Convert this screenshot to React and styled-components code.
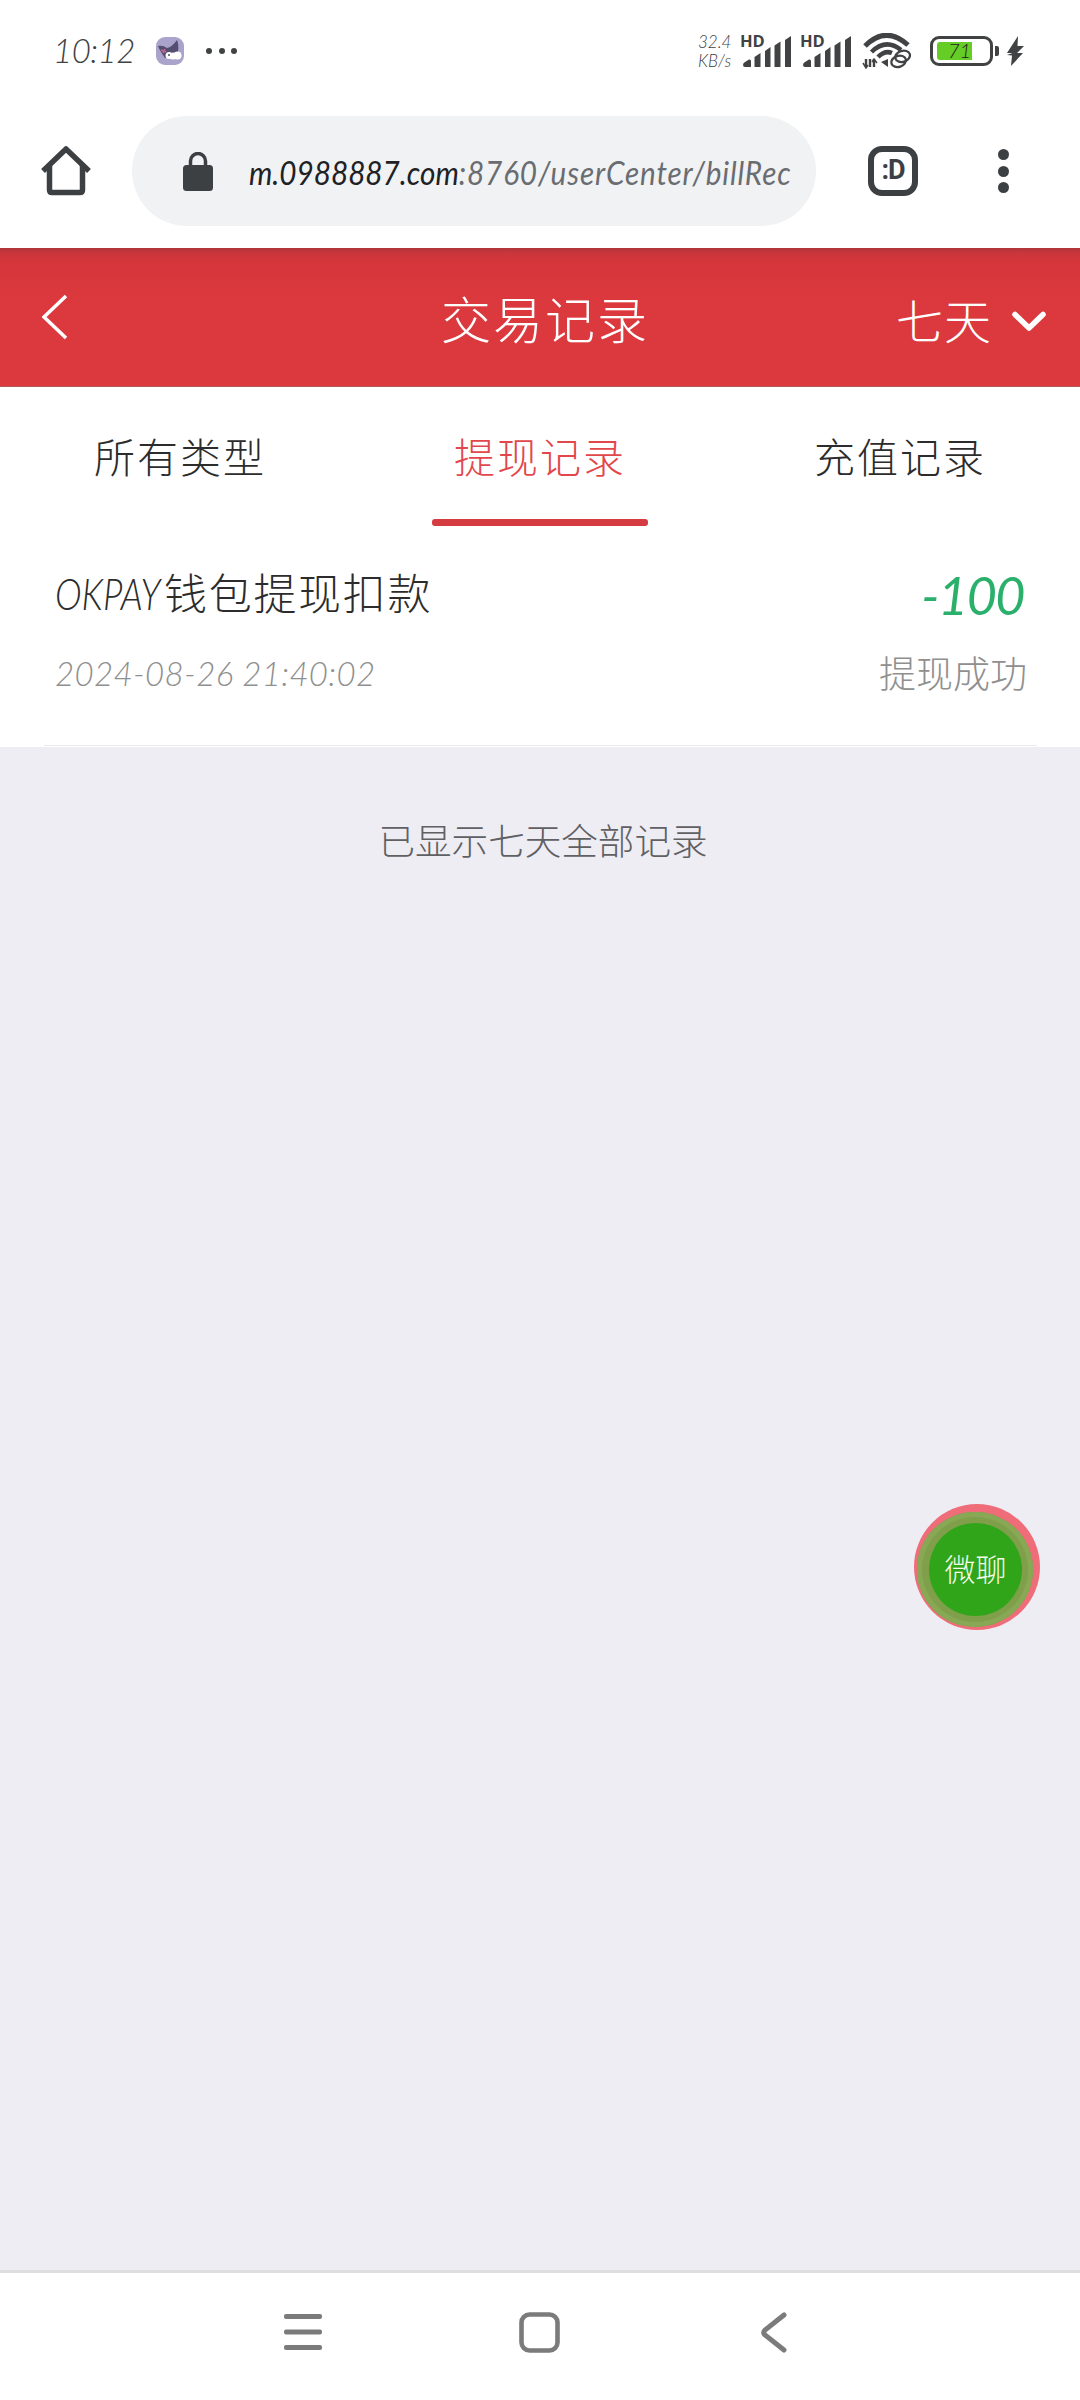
import React from 'react';
import styled, { createGlobalStyle } from 'styled-components';

const GlobalStyle = createGlobalStyle`
  * {
    box-sizing: border-box;
  }

  body {
    margin: 0;
    background: #eeedf3;
    font-family: Lato, 'Noto Sans CJK SC', sans-serif;
    font-weight: 300;
  }

  svg {
    display: block;
    flex-shrink: 0;
  }
`;

const tabs = ['所有类型', '提现记录', '充值记录'];

const records = [
  {
    wallet: 'OKPAY',
    title: '钱包提现扣款',
    time: '2024-08-26 21:40:02',
    amount: '-100',
    state: '提现成功',
  },
];

const SignalIcon = () => (
  <Signal>
    <HdLabel>HD</HdLabel>
    <svg width="49" height="31" viewBox="0 0 49 31" fill="#414243">
      <path d="M0 29 Q0 27 2 26 L6 23.5 Q8 23 8 25 V31 H2 Q0 31 0 29Z" />
      <path d="M11.5 21 L17.5 17 V31 H11.5Z" />
      <path d="M22 15 L27.500 11 V31 H22Z" />
      <path d="M31.500 9.500 L37.500 5.500 V31 H31.500Z" />
      <path d="M42 4 L48 0 V31 H42Z" />
    </svg>
  </Signal>
);

const WifiIcon = () => (
  <svg width="50" height="36" viewBox="-2 0 50 36" fill="none" stroke="#414243">
    <path d="M2 13 Q23 -8 45 12" strokeWidth="5" />
    <path d="M8.500 19 Q23 5 38 17" strokeWidth="4.500" />
    <path d="M15 24 Q22 17 29 20" strokeWidth="4.500" />
    <path d="M3 26 V34 M7 34 V26 M11 26 V34" strokeWidth="2.400" />
    <path d="M0 30 L3 35 L5 32 M9 29 L11 26 L14 30" strokeWidth="1.500" />
    <path d="M18 29 L25 26 V34Z" fill="#414243" stroke="none" />
    <ellipse cx="39.500" cy="23.500" rx="7.500" ry="5.500" strokeWidth="2.300" transform="rotate(-18 39 23)" />
    <ellipse cx="35.500" cy="28.500" rx="7.500" ry="5.500" strokeWidth="2.300" transform="rotate(-18 35 28)" />
  </svg>
);

const App = () => (
  <>
    <GlobalStyle />
    <Screen>
      <StatusBar>
        <Clock>10:12</Clock>
        <svg width="28" height="28" viewBox="0 0 28 28">
          <rect width="28" height="28" rx="9" fill="#aaa3cc" />
          <path d="M2 9 Q7 8 11 11 Q16 10 21 3 Q23 8 22 15 L19 20 L9 21 Q4 14 2 9Z" fill="#554e70" />
          <path d="M5 13 L10 15 M7 16 L9 12" stroke="#c06a94" strokeWidth="1.500" />
          <circle cx="13" cy="18.500" r="3.500" fill="#fff" />
          <circle cx="17" cy="19" r="3.500" fill="#fff" />
          <circle cx="21.500" cy="18.500" r="4" fill="#fff" />
          <circle cx="13" cy="18" r="1" fill="#554e70" />
        </svg>
        <MoreDots>
          <i />
          <i />
          <i />
        </MoreDots>
        <StatusRight>
          <Speed>
            <span>32.4</span>
            <span>KB/s</span>
          </Speed>
          <SignalIcon />
          <SignalIcon />
          <WifiIcon />
          <Battery>
            <BatteryLevel>71</BatteryLevel>
          </Battery>
          <BatteryTip />
          <svg width="18" height="30" viewBox="0 0 18 30" fill="#414243">
            <path d="M12 0 L1 17 H6.500 L1 19 L6 19.500 L5 30 L17 17 H11 L18 10 L11.500 10Z" />
          </svg>
        </StatusRight>
      </StatusBar>

      <Browser>
        <svg width="50" height="50" viewBox="0 0 50 50" fill="none" stroke="#3c4043" strokeWidth="5.500">
          <path d="M8.500 19 V44 Q8.500 46.500 11 46.500 H39 Q41.500 46.500 41.500 44 V19" />
          <path d="M2 25 L25 3 L48 25" strokeLinejoin="round" />
        </svg>
        <AddressBar>
          <svg width="30" height="40" viewBox="0 0 30 40">
            <rect y="13" width="30" height="26" rx="3.500" fill="#3c4043" />
            <path d="M7.500 16 V9 A7.500 7.500 0 0 1 22.500 9 V16" fill="none" stroke="#3c4043" strokeWidth="3.500" />
          </svg>
          <Url>
            m.0988887.com<UrlPath>:8760/userCenter/billRec</UrlPath>
          </Url>
        </AddressBar>
        <TabSwitcher>:D</TabSwitcher>
        <MenuDots>
          <i />
          <i />
          <i />
        </MenuDots>
      </Browser>

      <Header>
        <svg width="26" height="46" viewBox="0 0 26 46" fill="none" stroke="#fff" strokeWidth="3.500">
          <path d="M24 2 L2 23 L24 44" />
        </svg>
        <Title>交易记录</Title>
        <Period>
          <span>七天</span>
          <svg width="34" height="21" viewBox="0 0 34 21" fill="none" stroke="#fff" strokeWidth="5.500">
            <path d="M3 3.500 L17 17 L31 3.500" strokeLinecap="round" strokeLinejoin="round" />
          </svg>
        </Period>
      </Header>

      <Tabs>
        {tabs.map((tab, i) => (
          <Tab key={tab} $active={i === 1}>
            {tab}
          </Tab>
        ))}
      </Tabs>

      <List>
        {records.map((r) => (
          <Record key={r.time}>
            <Row>
              <RecordTitle>
                <Wallet>{r.wallet}</Wallet>
                {r.title}
              </RecordTitle>
              <Amount>{r.amount}</Amount>
            </Row>
            <Row>
              <Time>{r.time}</Time>
              <State>{r.state}</State>
            </Row>
          </Record>
        ))}
      </List>

      <EndNote>已显示七天全部记录</EndNote>

      <ChatButton>
        <ChatRing>
          <ChatCore>微聊</ChatCore>
        </ChatRing>
      </ChatButton>

      <NavBar>
        <svg width="38" height="36" viewBox="0 0 38 36" fill="#7b7b7b">
          <rect width="38" height="5" rx="2" />
          <rect y="15.500" width="38" height="5" rx="2" />
          <rect y="31" width="38" height="5" rx="2" />
        </svg>
        <svg width="41" height="41" viewBox="0 0 41 41" fill="none" stroke="#7b7b7b" strokeWidth="4.600">
          <rect x="2.500" y="2.500" width="36" height="36" rx="8" />
        </svg>
        <svg width="26" height="41" viewBox="0 0 26 41" fill="none" stroke="#7b7b7b" strokeWidth="5">
          <path d="M23 3 L4 18 Q1.500 20.500 4 23 L23 38" strokeLinecap="round" />
        </svg>
      </NavBar>
    </Screen>
  </>
);

export default App;

/* Styled Components */

const Screen = styled.div`
  position: relative;
  width: 1080px;
  height: 2400px;
  display: flex;
  flex-direction: column;
  overflow: hidden;
`;

const StatusBar = styled.div`
  height: 102px;
  padding: 0 56px 0 53px;
  display: flex;
  align-items: center;
  background: #fff;
  color: #414243;
`;

const Clock = styled.div`
  width: 103px;
  padding-bottom: 2px;
  font-size: 33px;
  font-style: italic;
  letter-spacing: -0.5px;
  white-space: nowrap;
`;

const MoreDots = styled.div`
  display: flex;
  gap: 6.5px;
  margin-left: 22px;

  i {
    width: 6px;
    height: 6px;
    border-radius: 50%;
    background: #414243;
  }
`;

const StatusRight = styled.div`
  display: flex;
  align-items: center;
  margin-left: auto;
`;

const Speed = styled.div`
  width: 43px;
  display: flex;
  flex-direction: column;
  font-size: 17px;
  line-height: 19px;
  font-style: italic;
`;

const Signal = styled.div`
  width: 60px;
  height: 31px;
  padding-left: 2px;
  position: relative;
`;

const HdLabel = styled.span`
  position: absolute;
  left: -1px;
  top: -3px;
  font: 700 16.5px/16px 'Open Sans', sans-serif;
`;

const Battery = styled.div`
  width: 63px;
  height: 30px;
  margin-left: 19px;
  padding: 3px 4px;
  border: 3px solid #414243;
  border-radius: 9px;
`;

const BatteryLevel = styled.div`
  width: 35px;
  height: 18px;
  padding-left: 11px;
  border-radius: 3px 0 0 3px;
  background: #66cc26;
  font-size: 20px;
  line-height: 17px;
  font-style: italic;
  color: #222;
`;

const BatteryTip = styled.div`
  width: 4px;
  height: 10px;
  margin: 0 7px 0 2px;
  border-radius: 0 2px 2px 0;
  background: #414243;
`;

const Browser = styled.div`
  height: 146px;
  padding: 0 71px 8px 41px;
  display: flex;
  align-items: center;
  background: #fff;
`;

const AddressBar = styled.div`
  width: 684px;
  height: 110px;
  margin-left: 41px;
  padding: 2px 0 0 51px;
  display: flex;
  align-items: center;
  gap: 35px;
  border-radius: 55px;
  background: #f1f2f4;
`;

const Url = styled.div`
  width: 541px;
  padding-left: 1px;
  transform: scaleX(0.9);
  transform-origin: left;
  font-size: 33px;
  line-height: 44px;
  font-style: italic;
  font-weight: 400;
  white-space: nowrap;
  color: #202124;
`;

const UrlPath = styled.span`
  letter-spacing: 0.95px;
  color: #696c70;
`;

const TabSwitcher = styled.div`
  width: 50px;
  height: 50px;
  margin-left: 52px;
  border: 6px solid #3c4043;
  border-radius: 14px;
  color: #3c4043;
  font: 700 27px/36px Roboto, sans-serif;
  letter-spacing: -1px;
  text-align: center;
`;

const MenuDots = styled.div`
  display: flex;
  flex-direction: column;
  gap: 5.5px;
  margin-left: auto;

  i {
    width: 11px;
    height: 11px;
    border-radius: 50%;
    background: #3c4043;
  }
`;

const Header = styled.div`
  height: 139px;
  padding: 0 34px 0 42px;
  display: grid;
  grid-template-columns: 1fr auto 1fr;
  align-items: center;
  background: linear-gradient(#ae353b, #ca363b 5px, #d5363b 14px, #da383d 42px, #dc393e 70px);
  border-bottom: 1px solid #b5585c;
  color: #fff;
`;

const Title = styled.div`
  padding: 5px 2px 0 4px;
  font-size: 50px;
  line-height: 60px;
  letter-spacing: 2px;
`;

const Period = styled.div`
  justify-self: end;
  padding-top: 8px;
  display: flex;
  align-items: center;
  gap: 20px;
  font-size: 47px;
  line-height: 60px;
  letter-spacing: 1px;
`;

const Tabs = styled.div`
  height: 144px;
  display: grid;
  grid-template-columns: repeat(3, 1fr);
  justify-items: center;
  background: #fff;
`;

const Tab = styled.div`
  width: 216px;
  height: 139px;
  display: flex;
  flex-direction: column;
  justify-content: space-between;
  font-size: 41px;
  letter-spacing: 2px;
  line-height: 132px;
  padding-top: 5px;
  text-align: center;
  color: ${(props) => (props.$active ? '#e2484b' : '#2c2c2c')};

  &::after {
    content: '';
    height: 7px;
    flex-shrink: 0;
    margin-top: -5px;
    border-radius: 3px;
    background: ${(props) => (props.$active ? '#d43c41' : 'transparent')};
  }
`;

const List = styled.div`
  padding: 0 43px 1px 44px;
  background: #fff;
`;

const Record = styled.div`
  height: 215px;
  padding: 23px 10px 0 11px;
  border-bottom: 1px solid #e9e9ee;
`;

const Row = styled.div`
  height: 80px;
  display: flex;
  justify-content: space-between;
  align-items: center;
`;

const RecordTitle = styled.div`
  display: flex;
  font-size: 43px;
  line-height: 80px;
  letter-spacing: 1.7px;
  color: #2c2c2c;
`;

const Wallet = styled.span`
  width: 109px;
  transform: scaleX(0.84);
  transform-origin: left;
  font-style: italic;
  letter-spacing: 0;
  white-space: nowrap;
`;

const Amount = styled.div`
  padding: 2px 3px 0 0;
  font-size: 52px;
  font-style: italic;
  font-weight: 400;
  letter-spacing: -1.5px;
  color: #2bb06c;
`;

const Time = styled.div`
  padding-bottom: 3px;
  font-size: 33px;
  font-style: italic;
  letter-spacing: 0.35px;
  color: #8f8f8f;
`;

const State = styled.div`
  padding-bottom: 5px;
  font-size: 37px;
  color: #8f8f8f;
`;

const EndNote = styled.div`
  padding-top: 67px;
  padding-left: 6px;
  font-size: 36.6px;
  line-height: 54px;
  text-align: center;
  color: #606063;
`;

const ChatButton = styled.div`
  position: absolute;
  left: 914px;
  top: 1504px;
  width: 126px;
  height: 126px;
  padding: 8px 0 0 3px;
  border-radius: 50%;
  background: #ee6d79;
`;

const ChatRing = styled.div`
  width: 116px;
  height: 115px;
  padding: 11px 0 0 12px;
  border-radius: 50%;
  background: #87a653;
  box-shadow: inset 0 0 0 5px #88a855, inset 0 0 0 12px #7f9f4b;
`;

const ChatCore = styled.div`
  width: 93px;
  height: 93px;
  border-radius: 50%;
  background: #30a51a;
  font-size: 31px;
  line-height: 92px;
  text-align: center;
  color: #f4fbe9;
`;

const NavBar = styled.div`
  height: 130px;
  margin-top: auto;
  padding: 0 293px 9px 284px;
  display: flex;
  justify-content: space-between;
  align-items: center;
  background: #fff;
  border-top: 3px solid #dedee0;

  svg:nth-child(2) {
    margin-right: 5px;
  }
`;
